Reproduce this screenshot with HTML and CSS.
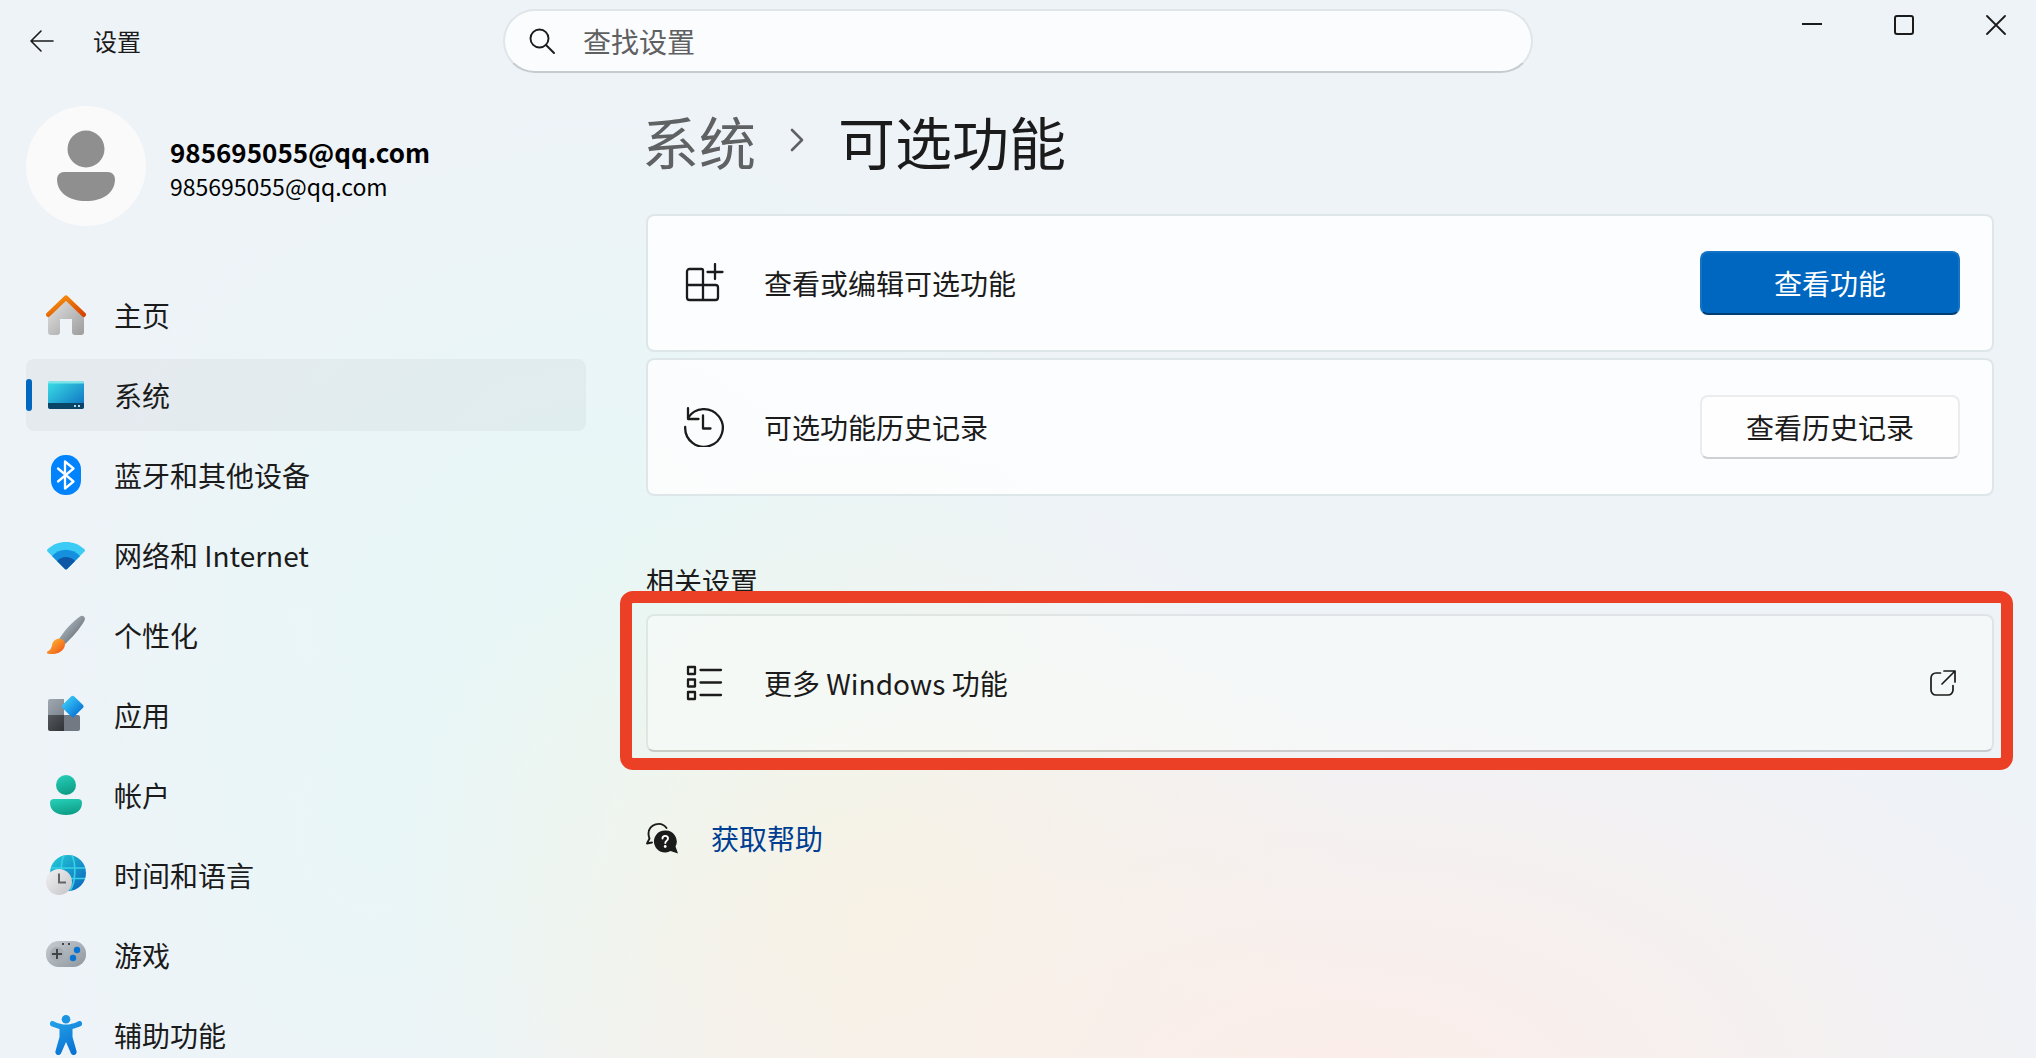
FILE: index.html
```
<!DOCTYPE html>
<html lang="zh-CN">
<head>
    <meta charset="utf-8">
    <meta name="viewport" content="width=device-width, initial-scale=1">
    <title>设置</title>
    <link rel="stylesheet" href="styles.css">
</head>
<body>
    <header class="titlebar">
        <div class="titlebar-left">
            <button type="button" class="back-button" aria-label="返回">
                <svg width="26" height="26" viewBox="0 0 26 26" fill="none" stroke="currentColor" stroke-width="1.6" stroke-linecap="round" stroke-linejoin="round"><path d="M24 13H2M12 3L2 13l10 10"/></svg>
            </button>
            <span class="app-name">设置</span>
        </div>
        <form class="search">
            <label for="search-input" class="search-icon" aria-label="查找设置">
                <svg width="26" height="26" viewBox="0 0 26 26" fill="none" stroke="currentColor" stroke-width="1.9" stroke-linecap="round"><circle cx="10.5" cy="10.5" r="9"/><path d="M17 17l8 8"/></svg>
            </label>
            <input type="text" id="search-input" placeholder="查找设置">
        </form>
        <div class="window-buttons">
            <button type="button" aria-label="最小化"><svg width="20" height="20" viewBox="0 0 20 20" fill="none" stroke="currentColor" stroke-width="2"><path d="M0 9h20"/></svg></button>
            <button type="button" aria-label="最大化"><svg width="20" height="20" viewBox="0 0 20 20" fill="none" stroke="currentColor" stroke-width="2"><rect x="1" y="1" width="18" height="18" rx="2"/></svg></button>
            <button type="button" aria-label="关闭"><svg width="20" height="20" viewBox="0 0 20 20" fill="none" stroke="currentColor" stroke-width="1.8" stroke-linecap="round"><path d="M1 1l18 18M19 1L1 19"/></svg></button>
        </div>
    </header>

    <div class="layout">
        <aside class="sidebar">
            <div class="account">
                <svg class="avatar" viewBox="0 0 120 120">
                    <circle cx="60" cy="60" r="60" fill="#fafafa"/>
                    <circle cx="60" cy="43" r="18.500" fill="#8f8f8f"/>
                    <path d="M38 66h44a7 7 0 0 1 7 7c0 14-12 22-29 22s-29-8-29-22a7 7 0 0 1 7-7z" fill="#8f8f8f"/>
                </svg>
                <div class="account-text">
                    <div class="account-name">985695055@qq.com</div>
                    <div class="account-mail">985695055@qq.com</div>
                </div>
            </div>

            <nav>
                <ul class="nav-list">
                    <li><a href="#" class="nav-item">
                        <svg class="nav-icon" viewBox="0 0 40 40">
                            <defs>
                                <linearGradient id="home-body" x1="0" y1="0" x2="1" y2="1"><stop offset="0" stop-color="#e6e6e6"/><stop offset="1" stop-color="#9c9c9c"/></linearGradient>
                                <linearGradient id="home-roof" x1="0" y1="0" x2="1" y2="1"><stop offset="0" stop-color="#fa9a10"/><stop offset="1" stop-color="#d64200"/></linearGradient>
                            </defs>
                            <path d="M2 18L20 3l18 15v19a3 3 0 0 1-3 3h-6a3 3 0 0 1-3-3V24H14v13a3 3 0 0 1-3 3H5a3 3 0 0 1-3-3z" fill="url(#home-body)"/>
                            <path d="M2.300 19.700L20 2.600l17.700 17.100" fill="none" stroke="url(#home-roof)" stroke-width="4.600" stroke-linecap="round" stroke-linejoin="round"/>
                        </svg>主页</a></li>
                    <li><a href="#" class="nav-item active" aria-current="page">
                        <svg class="nav-icon" viewBox="0 0 40 40">
                            <defs><linearGradient id="screen" x1="0" y1="0" x2="1" y2="1"><stop offset="0" stop-color="#3be0e6"/><stop offset="1" stop-color="#0c6cc0"/></linearGradient></defs>
                            <rect x="2" y="6" width="36" height="28" rx="2.500" fill="url(#screen)"/>
                            <path d="M2 8.500A2.500 2.500 0 0 1 4.500 6h31A2.500 2.500 0 0 1 38 8.500z" fill="#7fe3ea"/>
                            <path d="M2 28h36v3.500a2.500 2.500 0 0 1-2.500 2.500h-31A2.500 2.500 0 0 1 2 31.500z" fill="#0a4467"/>
                            <path d="M28 30h2v2h-2zM32 30h2v2h-2z" fill="#b8d8e8"/>
                        </svg>系统</a></li>
                    <li><a href="#" class="nav-item">
                        <svg class="nav-icon" viewBox="0 0 40 40">
                            <rect x="5" width="30" height="40" rx="14.500" fill="#0083fd"/>
                            <path d="M12 13.500l15.500 13-8.500 7v-27l8.500 7-15.500 13" fill="none" stroke="#fff" stroke-width="2.300" stroke-linecap="round" stroke-linejoin="round"/>
                        </svg>蓝牙和其他设备</a></li>
                    <li><a href="#" class="nav-item">
                        <svg class="nav-icon" viewBox="0 0 40 40">
                            <path d="M1.500 16.500a1.500 1.500 0 0 1 0-2.200c10-9.800 27-9.800 37 0a1.500 1.500 0 0 1 0 2.200L21 34a1.500 1.500 0 0 1-2 0z" fill="#3ccbf4"/>
                            <path d="M6 21c8-8.500 20-8.500 28 0L21 34a1.500 1.500 0 0 1-2 0z" fill="#1590df"/>
                            <path d="M11 26c5-5.500 13-5.500 18 0l-8 8a1.500 1.500 0 0 1-2 0z" fill="#0d57a6"/>
                        </svg>网络和 Internet</a></li>
                    <li><a href="#" class="nav-item">
                        <svg class="nav-icon" viewBox="0 0 40 40">
                            <defs>
                                <linearGradient id="brush-handle" x1="0" y1="0" x2="1" y2="1"><stop offset=".2" stop-color="#b0b8c0"/><stop offset=".8" stop-color="#646c75"/></linearGradient>
                                <linearGradient id="brush-tip" x1="0" y1="0" x2="1" y2="1"><stop offset="0" stop-color="#ffc233"/><stop offset="1" stop-color="#ee4d16"/></linearGradient>
                            </defs>
                            <path d="M13 24C19 15 27 6 34 1.500c3-2 6 1 4.500 4C34.500 13 27 22 18 30z" fill="url(#brush-handle)"/>
                            <path d="M6 30c1-5 5-7 9-6 4 1 5 5 3 9-3 6-12 7-16.500 5.500-1-.4-.8-1.500 0-1.900C4.500 35 5.500 33 6 30z" fill="url(#brush-tip)"/>
                        </svg>个性化</a></li>
                    <li><a href="#" class="nav-item">
                        <svg class="nav-icon" viewBox="0 0 40 40">
                            <defs>
                                <linearGradient id="app-light" x1="0" y1="0" x2="1" y2="1"><stop offset="0" stop-color="#a0a8b1"/><stop offset="1" stop-color="#7e858e"/></linearGradient>
                                <linearGradient id="app-dark" x1="0" y1="0" x2="1" y2="1"><stop offset="0" stop-color="#55595e"/><stop offset="1" stop-color="#303336"/></linearGradient>
                                <linearGradient id="app-tile" x1="0" y1="0" x2="1" y2="1"><stop offset=".2" stop-color="#38c4f6"/><stop offset=".8" stop-color="#0a78d8"/></linearGradient>
                            </defs>
                            <path d="M4 4h14v16H2V6a2 2 0 0 1 2-2z" fill="url(#app-light)"/>
                            <path d="M18 20h14a2 2 0 0 1 2 2v12a2 2 0 0 1-2 2H18z" fill="#727982"/>
                            <path d="M2 20h16v16H4a2 2 0 0 1-2-2z" fill="url(#app-dark)"/>
                            <path d="M25.300 1.300a2 2 0 0 1 2.700 0l9 8.700a2 2 0 0 1 0 2.800l-9 9a2 2 0 0 1-2.700 0l-9-9a2 2 0 0 1 0-2.800z" fill="url(#app-tile)"/>
                        </svg>应用</a></li>
                    <li><a href="#" class="nav-item">
                        <svg class="nav-icon" viewBox="0 0 40 40">
                            <defs><linearGradient id="person" x1="0" y1="0" x2=".3" y2="1"><stop offset="0" stop-color="#27d1b9"/><stop offset="1" stop-color="#0f9f89"/></linearGradient></defs>
                            <circle cx="20" cy="10" r="10" fill="url(#person)"/>
                            <path d="M8 24h24a4 4 0 0 1 4 4c0 8-7 12-16 12S4 36 4 28a4 4 0 0 1 4-4z" fill="url(#person)"/>
                        </svg>帐户</a></li>
                    <li><a href="#" class="nav-item">
                        <svg class="nav-icon" viewBox="0 0 40 40">
                            <defs>
                                <linearGradient id="globe" x1="0" y1="0" x2="1" y2="1"><stop offset="0" stop-color="#25d0d8"/><stop offset="1" stop-color="#0a60bd"/></linearGradient>
                                <linearGradient id="clock" x1="0" y1="0" x2="1" y2="1"><stop offset="0" stop-color="#f2f2f4"/><stop offset="1" stop-color="#c4c4c6"/></linearGradient>
                            </defs>
                            <circle cx="22" cy="18" r="18" fill="url(#globe)"/>
                            <path d="M5 13h34M5 23.500h34M18 .5c-4 8-4 27 2 35M26 .5c4 8 4 27-2 35" fill="none" stroke="#35d2e6" stroke-width="1.600"/>
                            <circle cx="13" cy="27" r="13" fill="url(#clock)"/>
                            <path d="M13 18.500V27.500h7" fill="none" stroke="#606468" stroke-width="2"/>
                        </svg>时间和语言</a></li>
                    <li><a href="#" class="nav-item">
                        <svg class="nav-icon" viewBox="0 0 40 40">
                            <defs><linearGradient id="gamepad" x1="0" y1="0" x2="1" y2="1"><stop offset="0" stop-color="#c6ccd2"/><stop offset="1" stop-color="#8f969d"/></linearGradient></defs>
                            <rect y="6" width="40" height="26" rx="12.500" fill="url(#gamepad)"/>
                            <circle cx="11" cy="19" r="7" fill="#a6acb2"/>
                            <path d="M6 19h10M11 14v10" stroke="#414548" stroke-width="2"/>
                            <circle cx="31" cy="15" r="3.200" fill="#0873d3"/><circle cx="27" cy="23" r="3.200" fill="#0873d3"/>
                            <path d="M16 8h2v2h-2zM22 8h2v2h-2z" fill="#414548"/>
                        </svg>游戏</a></li>
                    <li><a href="#" class="nav-item">
                        <svg class="nav-icon" viewBox="0 0 40 40">
                            <defs><linearGradient id="access" x1="0" y1="0" x2=".5" y2="1"><stop offset="0" stop-color="#24a3e8"/><stop offset="1" stop-color="#0a74d4"/></linearGradient></defs>
                            <circle cx="20" cy="4.300" r="4.300" fill="#1a94e0"/>
                            <path d="M4 8c.6-1.800 2-2.300 4-1.600 9 4.200 15 4.200 24 0 2-.7 3.400-.2 4 1.600.3 1.600-.4 2.800-2 3.500L26.500 14v8L30.500 36c.4 2-.3 3.300-2 3.900-1.700.3-3-.4-3.700-2L20 27l-4.800 10.900c-.7 1.600-2 2.300-3.700 2-1.700-.6-2.400-1.900-2-3.900l4-14v-8L6 11.500C4.400 10.800 3.700 9.600 4 8z" fill="url(#access)"/>
                        </svg>辅助功能</a></li>
                </ul>
            </nav>
        </aside>

        <main>
            <h1 class="breadcrumb">
                <a href="#">系统</a>
                <svg width="14" height="24" viewBox="0 0 14 24" fill="none" stroke="#5f6163" stroke-width="2.600" stroke-linecap="round" stroke-linejoin="round"><path d="M2 2l10 10L2 22"/></svg>
                <span>可选功能</span>
            </h1>

            <div class="card-list">
                <section class="card">
                    <svg class="card-icon" viewBox="0 0 40 40" fill="none" stroke="currentColor" stroke-width="2.300" stroke-linecap="round" stroke-linejoin="round"><path d="M19 22V7.500A1.500 1.500 0 0 0 17.500 6h-12A2.500 2.500 0 0 0 3 8.500v26A2.500 2.500 0 0 0 5.500 37h26a2.500 2.500 0 0 0 2.500-2.500v-10a2.500 2.500 0 0 0-2.500-2.500H3M19 22v15M31 1v15M23.500 9h15"/></svg>
                    <span class="card-label">查看或编辑可选功能</span>
                    <button type="button" class="button button-primary">查看功能</button>
                </section>
                <section class="card">
                    <svg class="card-icon" viewBox="0 0 40 40" fill="none" stroke="currentColor" stroke-width="2.300" stroke-linecap="round" stroke-linejoin="round"><path d="M4 1.200v10.800h10.500M4 11A18.800 18.800 0 1 1 1.200 20M19 8.500V21.500h7.500"/></svg>
                    <span class="card-label">可选功能历史记录</span>
                    <button type="button" class="button">查看历史记录</button>
                </section>
            </div>

            <h2 class="section-title">相关设置</h2>
            <div class="highlight">
                <a href="#" class="card card-link">
                    <svg class="card-icon" viewBox="0 0 40 40" fill="none" stroke="currentColor" stroke-width="2.300" stroke-linecap="round" stroke-linejoin="round"><path d="M4 4h7v7H4zM4 16.500h7v7H4zM4 29h7v7H4zM16.500 7H37M16.500 19.500H37M16.500 32H37"/></svg>
                    <span class="card-label">更多 Windows 功能</span>
                    <svg class="open-icon" width="26" height="26" viewBox="0 0 26 26" fill="none" stroke="currentColor" stroke-width="1.700" stroke-linecap="round" stroke-linejoin="round"><path d="M10.500 3H6a5 5 0 0 0-5 5v12a5 5 0 0 0 5 5h12a5 5 0 0 0 5-5v-4.500M14 1h11v11M25 1L12 14"/></svg>
                </a>
            </div>

            <a href="#" class="help">
                <svg width="32" height="32" viewBox="0 0 32 32">
                    <path d="M20.500 6A10 10 0 0 0 2.500 11.500c0 2 .3 3.500 1 5L1 21.500l5-1" fill="none" stroke="#1b1b1b" stroke-width="1.900" stroke-linecap="round" stroke-linejoin="round"/>
                    <path d="M19 8.500a11 11 0 1 0 5.500 20.500l7.500 2.500-2.500-7A11 11 0 0 0 19 8.500z" fill="#1b1b1b"/>
                    <path d="M16.500 16.500c0-3.500 5.500-3.500 5.500 0 0 2-2.700 2.300-2.700 4.500" fill="none" stroke="#fff" stroke-width="1.900" stroke-linecap="round"/>
                    <circle cx="19.200" cy="24.500" r="1.400" fill="#fff"/>
                </svg>
                <span>获取帮助</span>
            </a>
        </main>
    </div>
</body>
</html>
```
FILE: styles.css
```
* {
    box-sizing: border-box;
}

body {
    margin: 0;
    height: 100vh;
    overflow: hidden;
    font-family: "Noto Sans CJK SC", "Noto Sans", sans-serif;
    font-size: 28px;
    line-height: 40px;
    color: #1b1b1b;
    background-color: #eef3f8;
    background-image:
        radial-gradient(ellipse 42% 46% at 66% 104%, rgba(253, 237, 231, 0.95), rgba(253, 237, 231, 0)),
        radial-gradient(ellipse 24% 44% at 43% 86%, rgba(246, 244, 227, 0.9), rgba(246, 244, 227, 0)),
        radial-gradient(ellipse 18% 44% at 18% 78%, rgba(232, 247, 247, 0.7), rgba(232, 247, 247, 0)),
        radial-gradient(ellipse 26% 46% at 29% 54%, rgba(229, 248, 245, 0.8), rgba(229, 248, 245, 0));
}

a {
    color: inherit;
    text-decoration: none;
}

button {
    font: inherit;
    color: inherit;
}

svg {
    display: block;
    flex-shrink: 0;
}

.titlebar {
    display: grid;
    grid-template-columns: 1fr minmax(0, 1030px) 1fr;
    padding-top: 9px;
}

.titlebar-left {
    display: flex;
    align-items: center;
    gap: 38px;
    padding-left: 29px;
}

.app-name {
    font-size: 24px;
}

.back-button {
    padding: 0;
    border: none;
    background: none;
}

.search {
    display: flex;
    align-items: center;
    gap: 28px;
    height: 64px;
    padding: 0 24px;
    border: 2px solid #dfe5e9;
    border-bottom-color: #c6cbcf;
    border-radius: 32px;
    background-color: #fbfcfe;
}

.search input {
    flex: 1;
    min-width: 0;
    padding: 0;
    border: none;
    outline: none;
    background: none;
    font: inherit;
    color: #1b1b1b;
}

.search input::placeholder {
    color: #5f6062;
    opacity: 1;
}

.window-buttons {
    display: flex;
    justify-content: flex-end;
    align-items: flex-start;
    gap: 12px;
}

.window-buttons button {
    display: flex;
    justify-content: center;
    width: 80px;
    padding: 6px 0;
    border: none;
    background: none;
}

.layout {
    display: grid;
    grid-template-columns: 560px 1fr;
    gap: 60px;
    padding: 33px 42px 0 26px;
}

/* Sidebar */
.account {
    display: flex;
    align-items: center;
    gap: 24px;
    margin-bottom: 53px;
    color: #000;
}

.avatar {
    width: 120px;
    height: 120px;
}

.account-text {
    padding-top: 4px;
}

.account-name {
    font-size: 26px;
    line-height: 36px;
    font-weight: bold;
}

.account-mail {
    font-size: 23px;
    line-height: 32px;
}

.nav-list {
    display: flex;
    flex-direction: column;
    gap: 8px;
    margin: 0;
    padding: 0;
    list-style: none;
}

.nav-item {
    position: relative;
    display: flex;
    align-items: center;
    gap: 28px;
    height: 72px;
    padding-left: 20px;
    border-radius: 8px;
}

.nav-item.active {
    background-color: rgba(0, 0, 0, 0.035);
}

.nav-item.active::before {
    content: "";
    position: absolute;
    left: 0;
    width: 6px;
    height: 32px;
    border-radius: 3px;
    background-color: #0067c0;
}

.nav-icon {
    width: 40px;
    height: 40px;
}

/* Content */
.breadcrumb {
    display: flex;
    align-items: center;
    gap: 34px;
    margin: 0 0 40px -4px;
    font-size: 57px;
    font-weight: normal;
    line-height: 68px;
}

.breadcrumb a {
    color: #5f6163;
}

.card-list {
    display: flex;
    flex-direction: column;
    gap: 6px;
}

.card {
    display: flex;
    align-items: center;
    gap: 40px;
    height: 138px;
    padding: 0 32px 0 36px;
    border: 2px solid #dfe6ea;
    border-radius: 8px;
    background-color: rgba(255, 255, 255, 0.8);
    background-clip: padding-box;
}

.card-link {
    border-color: rgba(0, 0, 0, 0.06);
    border-bottom-color: rgba(0, 0, 0, 0.16);
    background-color: rgba(249, 251, 250, 0.6);
}

.card-icon {
    width: 40px;
    height: 40px;
}

.card-label {
    flex: 1;
}

.open-icon {
    margin-right: 4px;
}

.button {
    width: 260px;
    height: 64px;
    padding: 0;
    border: 2px solid #ebecee;
    border-bottom-color: #cfd0d1;
    border-radius: 8px;
    background-color: #fefefe;
}

.button-primary {
    border-color: #1473c5;
    border-bottom-color: #003e73;
    background-color: #0067c0;
    color: #fff;
}

.section-title {
    margin: 65px 0 13px;
    font-size: 28px;
    font-weight: normal;
}

/* Red frame drawn round the card */
.highlight {
    position: relative;
}

.highlight::after {
    content: "";
    position: absolute;
    inset: -23px -19px -18px -26px;
    border: 12px solid #eb4026;
    border-radius: 13px;
    pointer-events: none;
}

.help {
    display: inline-flex;
    align-items: center;
    gap: 33px;
    margin-top: 66px;
    color: #003e92;
}
```
